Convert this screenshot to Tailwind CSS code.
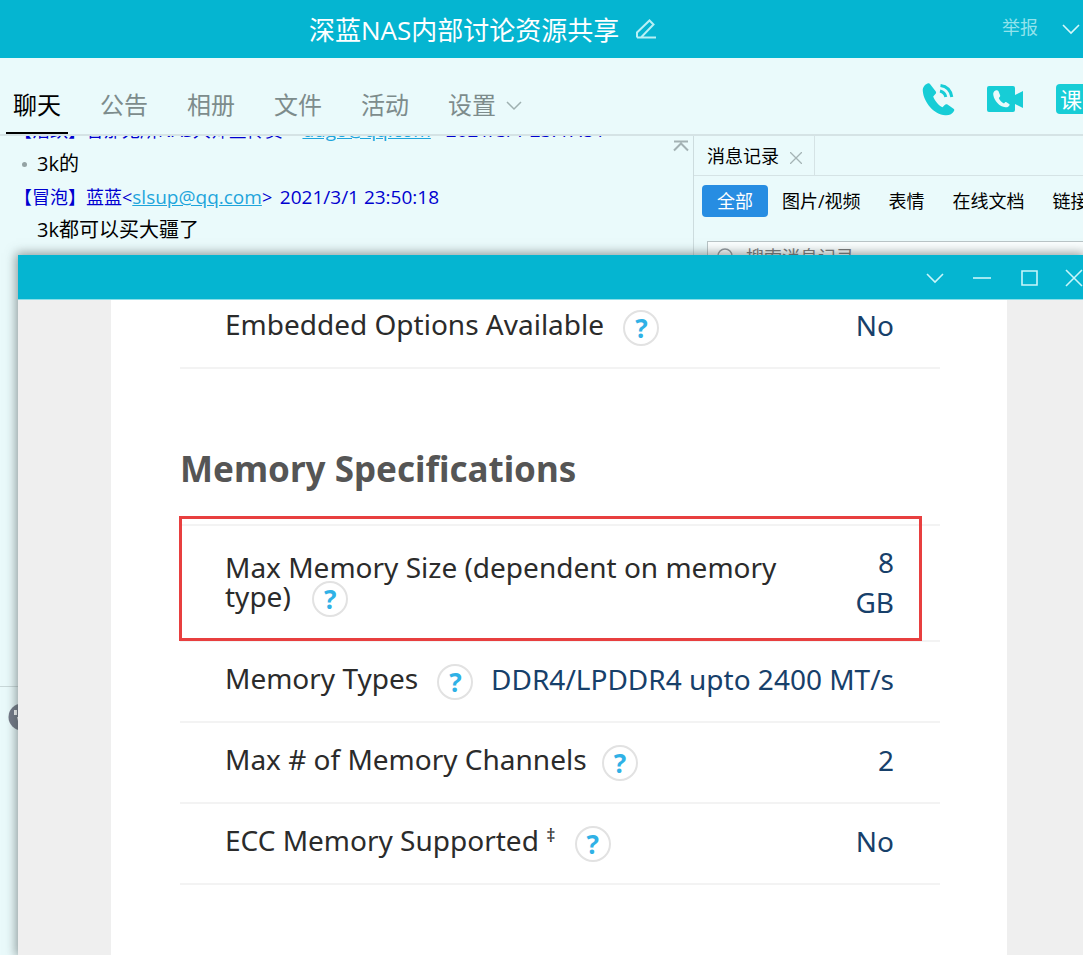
<!DOCTYPE html>
<html lang="zh-CN">
  <head>
    <meta charset="UTF-8" />
    <meta name="viewport" content="width=device-width, initial-scale=1.0" />
    <title>深蓝NAS内部讨论资源共享</title>
    <script src="https://cdn.jsdelivr.net/npm/@tailwindcss/browser@4"></script>
  </head>
  <body class="relative h-screen overflow-hidden flex flex-col bg-[#eafafb] text-black font-['Open_Sans','Noto_Sans_CJK_SC',sans-serif]">
    <header class="h-[58px] shrink-0 flex items-center bg-[#05b5d1] text-white pl-[309px]">
      <h1 class="text-[26px] leading-8 pt-px whitespace-nowrap">深蓝NAS内部讨论资源共享</h1>
      <button type="button" aria-label="编辑" class="ml-4">
        <svg class="w-[22px] h-[22px]" viewBox="0 0 22 22" fill="none" stroke="#b9f0f5" stroke-width="2"><path d="M2 19.500v-5L14.500 2.500l4 4L6 19.500H2M6 19.500h15" /></svg>
      </button>
      <button type="button" class="ml-auto text-lg text-[#92e3ec] pb-1">举报</button>
      <button type="button" aria-label="更多" class="ml-6">
        <svg class="w-[21px] h-[14px]" viewBox="0 0 21 14" fill="none" stroke="#d5f8fa" stroke-width="1.6"><path d="M1 3l8 8 8-8" /></svg>
      </button>
    </header>

    <div class="h-[78px] shrink-0 flex items-center justify-between border-b-2 border-[#d5e3e5] overflow-hidden">
      <nav class="h-full flex items-center gap-[39px] pl-[13px] text-2xl text-[#7d8c8c] whitespace-nowrap">
        <a href="#" class="h-full flex items-center pt-[19px] -ml-[7px] px-[7px] -mr-[7px] border-b-2 border-black text-black">聊天</a>
        <a href="#" class="pt-[18px]">公告</a>
        <a href="#" class="pt-[18px]">相册</a>
        <a href="#" class="pt-[18px]">文件</a>
        <a href="#" class="pt-[18px]">活动</a>
        <a href="#" class="pt-[18px] flex items-center gap-[10px]">设置
          <svg class="w-4 h-3" viewBox="0 0 16 12" fill="none" stroke="#9fb0b0" stroke-width="1.5"><path d="M1 3l7 7 7-7" /></svg>
        </a>
      </nav>
      <div class="flex items-center shrink-0 pt-[5px]">
        <button type="button" aria-label="语音通话" class="mr-[31px]">
          <svg class="w-[34px] h-[34px]" viewBox="0 0 34 34" fill="#17cdd6">
            <path d="M5.500 1.500C3 2.500.5 5 .8 9c.8 11 11 23.500 22.500 24.300 4 .3 7.200-1.500 8.700-4.300.6-1.100.2-2-.8-2.600l-5.700-3.800c-1-.6-2-.5-2.800.3l-2.200 2.300c-4-2-7.700-6.300-9.300-10.800l2.200-2.300c.8-.8.900-1.700.4-2.700L8.200 2.200c-.6-1-1.600-1.200-2.700-.7z" />
            <path d="M18 9.500c3 .7 5.200 3 5.800 6M18.500 4c6 .8 10.300 5 11.300 11.500" transform="translate(0 -.5)" fill="none" stroke="#17cdd6" stroke-width="3" />
          </svg>
        </button>
        <button type="button" aria-label="视频通话" class="mr-[33px]">
          <svg class="w-9 h-[26px]" viewBox="0 0 36 26" fill="#17cdd6">
            <path d="M2 0h24a2 2 0 0 1 2 2v7l8-4v17l-8-4v6a2 2 0 0 1-2 2H2a2 2 0 0 1-2-2V2a2 2 0 0 1 2-2z" />
            <path fill="#eafafb" d="M8.500 4.500C6.500 5.500 6 7 6.300 9c1 6 6 11.500 12.200 12.300 2 .2 3.300-.6 4-2 .3-.6.100-1-.4-1.400l-2.600-1.700c-.5-.3-1-.3-1.400.1l-1.100 1.200c-2.300-1.100-4.300-3.200-5.200-5.600l1.100-1.200c.4-.4.4-.9.2-1.400l-1.700-4.200c-.5-1-1.900-1.100-2.900-.6z" />
          </svg>
        </button>
        <button type="button" class="w-[27px] h-[30px] pl-1 overflow-hidden rounded-l-sm bg-[#17cdd6] text-white text-[22px] leading-7 text-left whitespace-nowrap">课堂</button>
      </div>
    </div>

    <div class="flex-1 min-h-0 flex">
      <main class="flex-1 min-w-0 flex flex-col">
        <div class="relative flex-1 overflow-hidden whitespace-nowrap">
          <div class="-mt-[22px] leading-[33px]">
            <p class="h-[33px] pt-[2px] pl-[14px] text-lg text-[#0000d0]">【活跃】昔那无所NAS大师宣传员 &nbsp;&lt;<a href="#" class="underline text-[19px] text-[#1ea5dc]">ddgo@qq.com</a>&gt; <span class="text-[19px]">2021/3/1 23:47:51</span></p>
            <p class="h-[33px] pt-px pl-[22px] flex items-center text-xl"><span class="w-[5px] h-[5px] mr-[10px] rounded-full bg-[#94a3a4]"></span>3k的</p>
            <p class="h-[33px] pt-[3px] pl-[14px] text-lg text-[#0000d0]">【冒泡】蓝蓝&lt;<a href="#" class="underline text-[19px] text-[#1ea5dc]">slsup@qq.com</a>&gt; <span class="ml-[3px] text-[19px]">2021/3/1 23:50:18</span></p>
            <p class="h-[33px] pt-[3px] pl-[37px] text-xl">3k都可以买大疆了</p>
          </div>
          <button type="button" aria-label="回到顶部" class="absolute right-1 top-1">
            <svg class="w-4 h-3" viewBox="0 0 16 12" fill="none" stroke="#a3b1b3" stroke-width="2"><path d="M1 1.500h14M1 10.500l7-7 7 7" /></svg>
          </button>
        </div>
        <div class="h-[269px] border-t border-[#c9d8d9] pt-4 pl-2">
          <svg class="w-7 h-7" viewBox="0 0 28 28"><circle cx="14" cy="14" r="13.500" fill="#737987" /><path fill="#fff" d="M6 7h3v5H6zM9 14h3v4h-2z" /></svg>
        </div>
      </main>

      <aside class="w-[390px] shrink-0 border-l border-[#cddcde] overflow-hidden text-lg whitespace-nowrap">
        <div class="h-10 flex border-b border-[#d5e3e5]">
          <div class="w-[121px] flex items-center gap-[11px] pl-[13px] border-r border-[#d5e3e5]">
            消息记录
            <button type="button" aria-label="关闭" class="pt-1">
              <svg class="w-3 h-3" viewBox="0 0 12 12" stroke="#a5b4b5" stroke-width="1.300"><path d="M0 0l12 12M12 0L0 12" /></svg>
            </button>
          </div>
        </div>
        <div class="flex items-center pl-2 pt-[9px] gap-[28px]">
          <button type="button" class="shrink-0 w-[66px] h-8 -mr-[14px] rounded-sm bg-[#278de2] text-white">全部</button>
          <button type="button" class="shrink-0">图片/视频</button>
          <button type="button" class="shrink-0">表情</button>
          <button type="button" class="shrink-0">在线文档</button>
          <button type="button" class="shrink-0">链接</button>
        </div>
        <label class="mt-[24px] ml-[13px] -mr-1 h-8 flex items-center gap-3 pl-2 border border-[#b9c4c6] bg-[#fafefe]">
          <svg class="w-[18px] h-[18px] shrink-0" viewBox="0 0 18 18" fill="none" stroke="#90979b" stroke-width="1.500"><circle cx="9" cy="8" r="7" /><path d="M14 13l4 4" /></svg>
          <input type="text" aria-label="搜索消息记录" placeholder="搜索消息记录" class="flex-1 min-w-0 outline-none placeholder:text-[#777]" />
        </label>
      </aside>
    </div>

    <!-- image viewer window floating over the chat -->
    <section class="absolute left-[18px] right-0 top-[255px] bottom-0 flex flex-col bg-[#efefef] shadow-[0_0_10px_2px_rgba(70,80,80,0.55)] font-['Noto_Sans',sans-serif]">
      <div class="h-[45px] shrink-0 flex items-center justify-end pt-px bg-[#05b5d1] border-b border-[#8adfe8] text-[#c9f6fa]">
        <button type="button" aria-label="菜单" class="mr-[29px]"><svg class="w-[18px] h-[18px]" viewBox="0 0 18 18" fill="none" stroke="currentColor" stroke-width="1.600"><path d="M1 5l8 8 8-8" /></svg></button>
        <button type="button" aria-label="最小化" class="mr-[29px]"><svg class="w-[18px] h-[18px]" viewBox="0 0 18 18" fill="none" stroke="currentColor" stroke-width="1.600"><path d="M0 9h18" /></svg></button>
        <button type="button" aria-label="最大化" class="mr-[27px]"><svg class="w-[18px] h-[18px]" viewBox="0 0 18 18" fill="none" stroke="currentColor" stroke-width="1.600"><path d="M2 2h15v14H2z" /></svg></button>
        <button type="button" aria-label="关闭"><svg class="w-[18px] h-[18px]" viewBox="0 0 18 18" fill="none" stroke="currentColor" stroke-width="1.600"><path d="M1 1l16 16M17 1L1 17" /></svg></button>
      </div>

      <div class="flex-1 ml-[93px] mr-[76px] bg-white pl-[69px] pr-[67px] text-[28px] text-[#2b2b2b]">
        <table class="block">
          <tbody class="block">
            <tr class="h-[69px] flex items-center justify-between pl-[45px] pr-[46px] pb-[18px] border-b-2 border-[#f3f3f3]">
              <td>Embedded Options Available <button type="button" aria-label="Help" class="ml-3 size-9 rounded-full border-2 border-[#e2e2e2] align-middle font-bold text-[26px] leading-8 text-[#2fb1e6]">?</button></td>
              <td class="text-[#17406a]">No</td>
            </tr>
          </tbody>
        </table>

        <h2 class="pt-[75px] pb-[30px] text-[35px] leading-[50px] font-bold text-[#555]">Memory Specifications</h2>

        <div class="relative">
          <table class="block">
            <tbody class="block border-t-2 border-[#f3f3f3]">
              <tr class="h-[116px] flex items-center justify-between pl-[45px] pr-[46px] pb-[3px] border-b-2 border-[#f3f3f3]">
                <td class="leading-[29px]">Max Memory Size (dependent on memory<br />type) <button type="button" aria-label="Help" class="ml-[14px] -my-2 size-9 rounded-full border-2 border-[#e2e2e2] bg-white align-middle font-bold text-[26px] leading-8 text-[#2fb1e6]">?</button></td>
                <td class="leading-10 text-right text-[#17406a]">8<br />GB</td>
              </tr>
              <tr class="h-[81px] flex items-center justify-between pl-[45px] pr-[46px] pb-[6px] border-b-2 border-[#f3f3f3]">
                <td>Memory Types <button type="button" aria-label="Help" class="ml-3 size-9 rounded-full border-2 border-[#e2e2e2] align-middle font-bold text-[26px] leading-8 text-[#2fb1e6]">?</button></td>
                <td class="text-[#17406a] whitespace-nowrap">DDR4/LPDDR4 upto 2400 MT/s</td>
              </tr>
              <tr class="h-[81px] flex items-center justify-between pl-[45px] pr-[46px] pb-[6px] border-b-2 border-[#f3f3f3]">
                <td>Max # of Memory Channels <button type="button" aria-label="Help" class="ml-2 size-9 rounded-full border-2 border-[#e2e2e2] align-middle font-bold text-[26px] leading-8 text-[#2fb1e6]">?</button></td>
                <td class="text-[#17406a]">2</td>
              </tr>
              <tr class="h-[81px] flex items-center justify-between pl-[45px] pr-[46px] pb-[6px] border-b-2 border-[#f3f3f3]">
                <td>ECC Memory Supported <sup class="text-lg">‡</sup> <button type="button" aria-label="Help" class="ml-3 size-9 rounded-full border-2 border-[#e2e2e2] align-middle font-bold text-[26px] leading-8 text-[#2fb1e6]">?</button></td>
                <td class="text-[#17406a]">No</td>
              </tr>
            </tbody>
          </table>
          <div class="absolute -left-px right-[18px] -top-2 h-[125px] border-3 border-[#e83f3f]"></div>
        </div>
      </div>
    </section>
  </body>
</html>
